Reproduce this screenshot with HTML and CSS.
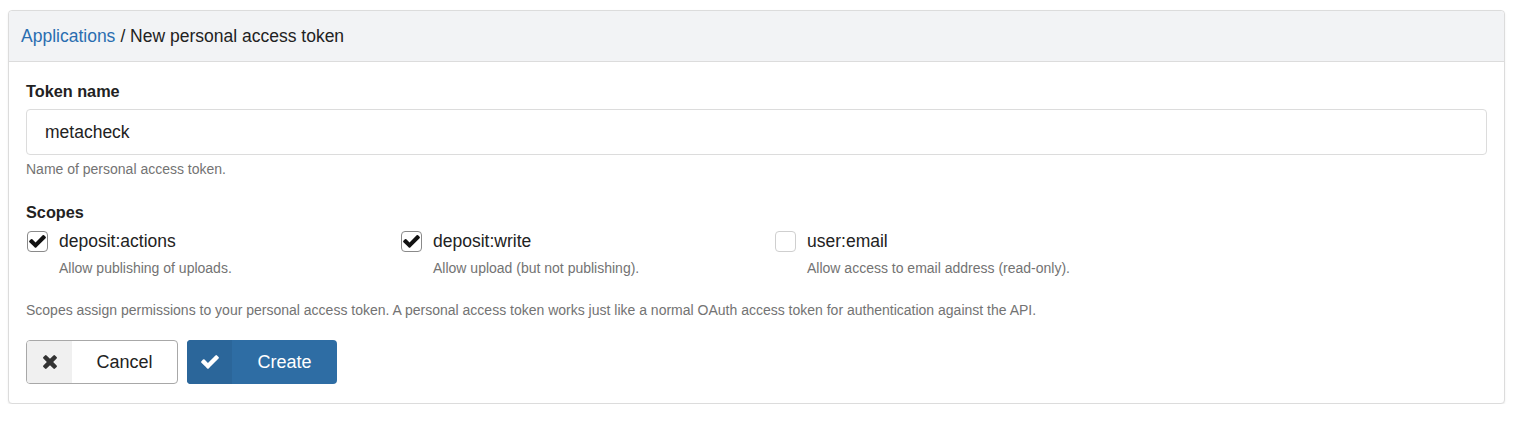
FILE: index.html
```html
<!DOCTYPE html>
<html lang="en">
<head>
  <meta charset="UTF-8">
  <title>New personal access token</title>
  <link rel="stylesheet" href="styles.css">
</head>
<body>
  <div class="panel">
    <div class="panel-heading">
      <a href="#">Applications</a> / New personal access token
    </div>
    <div class="panel-body">
      <div class="form-group">
        <label class="field-label" for="name">Token name</label>
        <input class="form-control" id="name" type="text" value="metacheck">
        <p class="help">Name of personal access token.</p>
      </div>

      <div class="form-group scopes">
        <div class="field-label">Scopes</div>
        <div class="scope-list">
          <div class="scope">
            <div class="scope-row">
              <span class="box checked">
                <svg class="tick" viewBox="110 150 1572 1572"><path d="M1671 566q0 40-28 68l-724 724-136 136q-28 28-68 28t-68-28l-136-136-362-362q-28-28-28-68t28-68l136-136q28-28 68-28t68 28l294 295 656-657q28-28 68-28t68 28l136 136q28 28 28 68z"/></svg>
              </span>
              <span class="scope-name">deposit:actions</span>
            </div>
            <p class="help">Allow publishing of uploads.</p>
          </div>
          <div class="scope">
            <div class="scope-row">
              <span class="box checked">
                <svg class="tick" viewBox="110 150 1572 1572"><path d="M1671 566q0 40-28 68l-724 724-136 136q-28 28-68 28t-68-28l-136-136-362-362q-28-28-28-68t28-68l136-136q28-28 68-28t68 28l294 295 656-657q28-28 68-28t68 28l136 136q28 28 28 68z"/></svg>
              </span>
              <span class="scope-name">deposit:write</span>
            </div>
            <p class="help">Allow upload (but not publishing).</p>
          </div>
          <div class="scope">
            <div class="scope-row">
              <span class="box"></span>
              <span class="scope-name">user:email</span>
            </div>
            <p class="help">Allow access to email address (read-only).</p>
          </div>
        </div>
        <p class="help note">Scopes assign permissions to your personal access token. A personal access token works just like a normal OAuth access token for authentication against the API.</p>
      </div>

      <div class="actions">
        <a href="#" class="btn btn-default">
          <span class="btn-icon">
            <svg class="times" viewBox="296 360 1200 1200"><path d="M1490 1322q0 40-28 68l-136 136q-28 28-68 28t-68-28l-294-294-294 294q-28 28-68 28t-68-28l-136-136q-28-28-28-68t28-68l294-294-294-294q-28-28-28-68t28-68l136-136q28-28 68-28t68 28l294 294 294-294q28-28 68-28t68 28l136 136q28 28 28 68t-28 68l-294 294 294 294q28 28 28 68z"/></svg>
          </span>
          <span class="btn-text">Cancel</span>
        </a>
        <a href="#" class="btn btn-primary">
          <span class="btn-icon">
            <svg class="tick" viewBox="110 150 1572 1572"><path d="M1671 566q0 40-28 68l-724 724-136 136q-28 28-68 28t-68-28l-136-136-362-362q-28-28-28-68t28-68l136-136q28-28 68-28t68 28l294 295 656-657q28-28 68-28t68 28l136 136q28 28 28 68z"/></svg>
          </span>
          <span class="btn-text">Create</span>
        </a>
      </div>
    </div>
  </div>
</body>
</html>
```

FILE: styles.css
```css
* {
  box-sizing: border-box;
}

body {
  margin: 0;
  padding: 10px 13px 0 8px;
  font-family: "Liberation Sans", Arial, sans-serif;
  color: #222;
  background: #fff;
}

.panel {
  border: 1px solid #dcdcdc;
  border-radius: 4px;
  box-shadow: 0 1px 2px rgba(0, 0, 0, 0.08);
  background: #fff;
}

.panel-heading {
  background: #f2f3f5;
  border-bottom: 1px solid #dcdcdc;
  border-radius: 4px 4px 0 0;
  height: 51px;
  padding: 0 12px;
  display: flex;
  align-items: center;
  font-size: 17.5px;
  color: #222;
}

.panel-heading a {
  color: #2a6db0;
  text-decoration: none;
  margin-right: 5px;
}

.panel-body {
  padding: 19px 17px 19px 17px;
}

.field-label {
  display: block;
  font-weight: bold;
  font-size: 16.25px;
  line-height: 20px;
  margin-bottom: 8px;
}

.form-control {
  display: block;
  width: 100%;
  height: 46px;
  padding: 0 18px;
  font-family: inherit;
  font-size: 17.5px;
  color: #222;
  border: 1px solid #dcdcdc;
  border-radius: 4px;
  background: #fff;
  outline: none;
}

.help {
  margin: 0;
  font-size: 14px;
  line-height: 18px;
  color: #737373;
}

.form-group > .help {
  margin-top: 5px;
}

.scopes {
  margin-top: 24px;
}

.scopes .field-label {
  margin-bottom: 0;
}

.scope-list {
  display: grid;
  grid-template-columns: repeat(3, 374px);
  margin-top: 8px;
  margin-bottom: 24px;
}

.scope-row {
  display: flex;
  align-items: center;
  height: 22px;
}

.box {
  width: 21px;
  height: 21px;
  margin-left: 1px;
  border: 1px solid #cfcfcf;
  border-radius: 4px;
  display: flex;
  align-items: center;
  justify-content: center;
  background: #fff;
}

.box.checked {
  border-color: #8a8a8a;
}

.box .tick {
  width: 17px;
  height: 17px;
  fill: #111;
}

.scope-name {
  margin-left: 11px;
  font-size: 17.5px;
  color: #222;
}

.scope .help {
  margin-top: 7px;
  margin-left: 33px;
}

.actions {
  display: flex;
  gap: 9px;
  margin-top: 21px;
}

.btn {
  display: flex;
  align-items: stretch;
  height: 44px;
  border-radius: 4px;
  text-decoration: none;
  font-size: 18px;
  overflow: hidden;
}

.btn-icon {
  width: 45px;
  display: flex;
  align-items: center;
  justify-content: center;
}

.btn-text {
  flex: 1;
  display: flex;
  align-items: center;
  justify-content: center;
}

.btn-default {
  width: 152px;
  border: 1px solid #a8a8a8;
  color: #222;
  background: #fff;
}

.btn-default .btn-icon {
  background: #f0f0f0;
}

.btn-default .times {
  width: 14px;
  height: 14px;
  fill: #333;
}

.btn-primary {
  width: 150px;
  background: #2e6da4;
  color: #fff;
}

.btn-primary .btn-icon {
  background: #2b669a;
}

.btn-primary .tick {
  width: 18px;
  height: 18px;
  fill: #fff;
}
```
